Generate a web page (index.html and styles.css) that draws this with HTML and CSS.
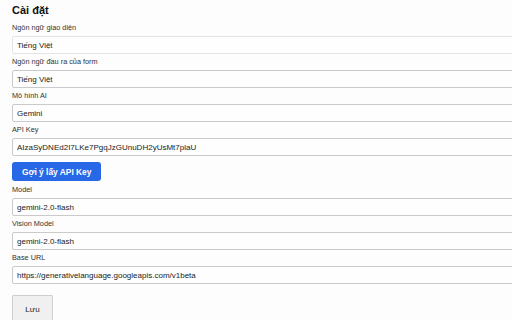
FILE: index.html
```html
<!DOCTYPE html>
<html lang="vi">
<head>
    <meta charset="UTF-8">
    <meta name="viewport" content="width=device-width, initial-scale=1.0">
    <title>Cài đặt</title>
    <link rel="stylesheet" href="styles.css">
</head>
<body>

    <div class="settings">
        <h1>Cài đặt</h1>

        <div class="field">
            <label for="uiLang">Ngôn ngữ giao diện</label>
            <select id="uiLang" class="light">
                <option>Tiếng Việt</option>
            </select>
        </div>

        <div class="field">
            <label for="outLang">Ngôn ngữ đầu ra của form</label>
            <select id="outLang">
                <option>Tiếng Việt</option>
            </select>
        </div>

        <div class="field">
            <label for="aiModel">Mô hình AI</label>
            <select id="aiModel">
                <option>Gemini</option>
            </select>
        </div>

        <div class="field">
            <label for="apiKey">API Key</label>
            <input type="text" id="apiKey" value="AIzaSyDNEd2I7LKe7PgqJzGUnuDH2yUsMt7plaU">
        </div>

        <button class="btn-primary">Gợi ý lấy API Key</button>

        <div class="field">
            <label for="model">Model</label>
            <input type="text" id="model" value="gemini-2.0-flash">
        </div>

        <div class="field">
            <label for="visionModel">Vision Model</label>
            <input type="text" id="visionModel" value="gemini-2.0-flash">
        </div>

        <div class="field">
            <label for="baseUrl">Base URL</label>
            <input type="text" id="baseUrl" value="https://generativelanguage.googleapis.com/v1beta">
        </div>

        <button class="btn-save">Lưu</button>
    </div>

</body>
</html>
```

FILE: styles.css
```css
html, body {
    overflow: hidden;
}

body {
    font-family: 'Liberation Sans', Arial, sans-serif;
    background-color: #fcfdfc;
    color: #222;
    margin: 0;
    padding: 4px 12px;
}

.settings {
    display: flex;
    flex-direction: column;
    align-items: flex-start;
}

h1 {
    font-size: 11px;
    line-height: 13px;
    font-weight: bold;
    color: #111;
    margin: 0 0 6px;
}

.field {
    display: flex;
    flex-direction: column;
    margin-bottom: 3px;
}

.field label {
    font-size: 7.3px;
    line-height: 10px;
    color: #333;
    margin-bottom: 3px;
}

.field input,
.field select {
    box-sizing: border-box;
    width: 560px;
    height: 18px;
    padding: 0 4px;
    font-family: inherit;
    font-size: 8px;
    color: #222;
    background-color: #fdfefd;
    border: 1px solid #cacaca;
    border-radius: 2px;
    appearance: none;
    outline: none;
}

.field select.light {
    border-color: #e4e4e4;
}

.btn-primary {
    margin: 3px 0 4px;
    height: 19px;
    padding: 0 10px;
    font-family: inherit;
    font-size: 8.4px;
    font-weight: bold;
    color: #fff;
    background-color: #2867e6;
    border: none;
    border-radius: 3px;
    cursor: pointer;
}

.btn-save {
    margin-top: 8px;
    width: 41px;
    height: 28px;
    font-family: inherit;
    font-size: 8px;
    color: #222;
    background-color: #f0f0f0;
    border: 1px solid #cfcfcf;
    border-radius: 1px;
    cursor: pointer;
}
```
